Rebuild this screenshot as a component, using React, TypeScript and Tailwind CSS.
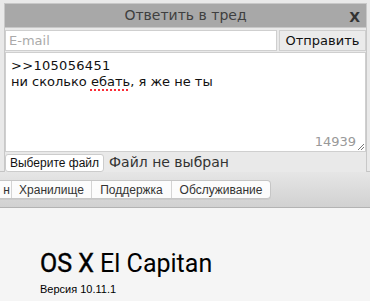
export default function App() {
  return (
    <div className="w-[370px] h-[301px] overflow-hidden bg-[#f5f5f5] flex flex-col">
      {/* Reply form */}
      <div className="h-[172px] bg-[#e9e9e9] pt-[3px] pl-[4px] pr-[3px] border-b border-[#c4c4c4]" style={{ fontFamily: '"DejaVu Sans", Verdana, sans-serif' }}>
        <div className="border border-[#c8c8c8] border-b-0 bg-[#e9e9e9]">
          <div className="h-[24px] bg-[#a8a8a8] flex items-center relative border-b border-[#c8c8c8]">
            <span className="flex-1 text-center text-[14px] text-[#3f3f3f]">Ответить в тред</span>
            <span className="absolute right-[6px] top-[3px] text-[14px] font-bold text-[#333]">X</span>
          </div>
          <div className="flex gap-[2px] mt-[2px]">
            <div className="flex-1 h-[21px] bg-white border border-[#cfcfcf] flex items-center pl-[3px] text-[13px] text-[#aaa]">E-mail</div>
            <div className="w-[87px] h-[21px] bg-[#ebebeb] border border-[#cfcfcf] flex items-center justify-center text-[13px] text-[#111]">Отправить</div>
          </div>
          <div className="mt-[1px] h-[100px] bg-white border border-[#cfcfcf] relative px-[5px] pt-[5px] text-[13px] leading-[16px] text-[#111]">
            <div className="tracking-[0.3px]">&gt;&gt;105056451</div>
            <div>
              ни сколько <span className="underline decoration-dotted decoration-red-500 decoration-2 underline-offset-[3px]">ебать</span>, я же не ты
            </div>
            <span className="absolute right-[9px] bottom-[1px] text-[13px] text-[#999]">14939</span>
            <svg className="absolute right-[1px] bottom-[1px]" width="7" height="7" viewBox="0 0 7 7">
              <path d="M1 7L7 1M4 7L7 4" stroke="#777" strokeWidth="1" />
            </svg>
          </div>
          <div className="flex items-center h-[19px] mt-[1px]">
            <div className="h-[18px] w-[99px] bg-white border border-[#ccc] rounded-[3px] flex items-center justify-center text-[12px] text-[#111]" style={{ fontFamily: '"Liberation Sans", Arial, sans-serif' }}>Выберите файл</div>
            <span className="ml-[5px] text-[14px] text-[#333]">Файл не выбран</span>
          </div>
        </div>
      </div>
      {/* macOS toolbar */}
      <div className="h-[36px] bg-gradient-to-b from-[#e6e6e6] to-[#d1d1d1] border-b border-[#b3b3b3] flex items-center" style={{ fontFamily: '"Liberation Sans", Arial, sans-serif' }}>
        <div className="flex h-[19px] bg-white/90 border border-[#c6c6c6] border-l-0 rounded-r-[4px] text-[12px] text-[#333] shadow-[0_1px_0_rgba(0,0,0,0.05)]">
          <div className="w-[12px] flex items-center justify-end pr-[1px] overflow-hidden border-r border-[#d4d4d4]">н</div>
          <div className="w-[80px] flex items-center justify-center border-r border-[#d4d4d4]">Хранилище</div>
          <div className="w-[80px] flex items-center justify-center border-r border-[#d4d4d4]">Поддержка</div>
          <div className="w-[98px] flex items-center justify-center">Обслуживание</div>
        </div>
      </div>
      {/* About content */}
      <div className="flex-1 pl-[40px] pt-[42px]" style={{ fontFamily: 'Roboto, "Liberation Sans", sans-serif' }}>
        <div className="text-[25px] leading-[28px] text-black">
          <span className="[-webkit-text-stroke:0.4px_black]">OS X</span> El Capitan
        </div>
        <div className="text-[11px] mt-[3px] text-black" style={{ fontFamily: '"Liberation Sans", Arial, sans-serif' }}>Версия 10.11.1</div>
      </div>
    </div>
  );
}
